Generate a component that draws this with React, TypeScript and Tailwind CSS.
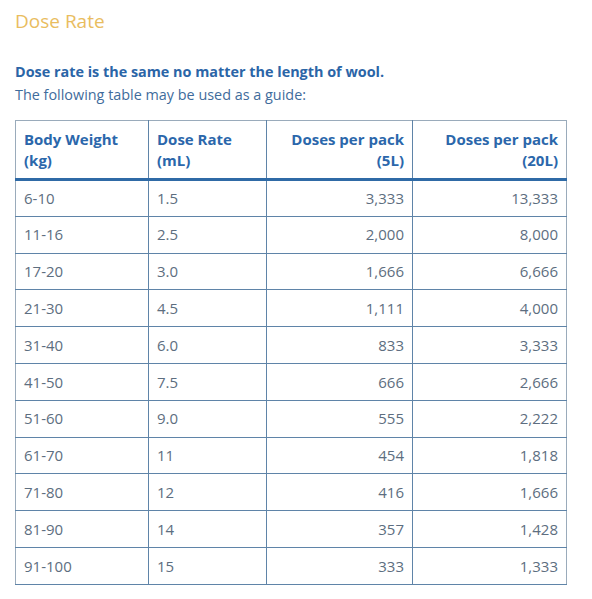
const rows: [string, string, string, string][] = [
  ['6-10', '1.5', '3,333', '13,333'],
  ['11-16', '2.5', '2,000', '8,000'],
  ['17-20', '3.0', '1,666', '6,666'],
  ['21-30', '4.5', '1,111', '4,000'],
  ['31-40', '6.0', '833', '3,333'],
  ['41-50', '7.5', '666', '2,666'],
  ['51-60', '9.0', '555', '2,222'],
  ['61-70', '11', '454', '1,818'],
  ['71-80', '12', '416', '1,666'],
  ['81-90', '14', '357', '1,428'],
  ['91-100', '15', '333', '1,333'],
];

export default function App() {
  return (
    <div
      className="min-h-screen bg-white px-[15px] pt-[7px]"
      style={{ fontFamily: '"Open Sans", "Liberation Sans", sans-serif' }}
    >
      <h2 className="text-[19px] leading-[28px] text-[#e9bd5f]">Dose Rate</h2>

      <div className="mt-[25px] text-[14.4px] leading-[23px]">
        <p className="font-bold text-[#2b65a7]">Dose rate is the same no matter the length of wool.</p>
        <p className="text-[#3f6c9c]">The following table may be used as a guide:</p>
      </div>

      <table className="mt-[14px] w-[551px] table-fixed border-collapse border border-[#9aabbb] text-[15px]">
        <colgroup>
          <col className="w-[133px]" />
          <col className="w-[118px]" />
          <col className="w-[146px]" />
          <col className="w-[154px]" />
        </colgroup>
        <thead>
          <tr className="border-b-[3px] border-[#2f6aa6] align-top font-bold leading-[21px] text-[#2b67ab]">
            <th className="border-r border-[#5f84a8] px-[8px] pt-[8px] pb-[7px] text-left font-bold">
              Body Weight
              <br />
              (kg)
            </th>
            <th className="border-r border-[#5f84a8] px-[8px] pt-[8px] pb-[7px] text-left font-bold">
              Dose Rate
              <br />
              (mL)
            </th>
            <th className="border-r border-[#5f84a8] px-[8px] pt-[8px] pb-[7px] text-right font-bold">
              Doses per pack
              <br />
              (5L)
            </th>
            <th className="px-[8px] pt-[8px] pb-[7px] text-right font-bold">
              Doses per pack
              <br />
              (20L)
            </th>
          </tr>
        </thead>
        <tbody className="text-[#5d6e80]">
          {rows.map((r) => (
            <tr key={r[0]} className="h-[36.8px] border-b border-[#5f84a8]">
              <td className="border-r border-[#5f84a8] px-[8px]">{r[0]}</td>
              <td className="border-r border-[#5f84a8] px-[8px]">{r[1]}</td>
              <td className="border-r border-[#5f84a8] px-[8px] text-right">{r[2]}</td>
              <td className="px-[8px] text-right">{r[3]}</td>
            </tr>
          ))}
        </tbody>
      </table>
    </div>
  );
}
